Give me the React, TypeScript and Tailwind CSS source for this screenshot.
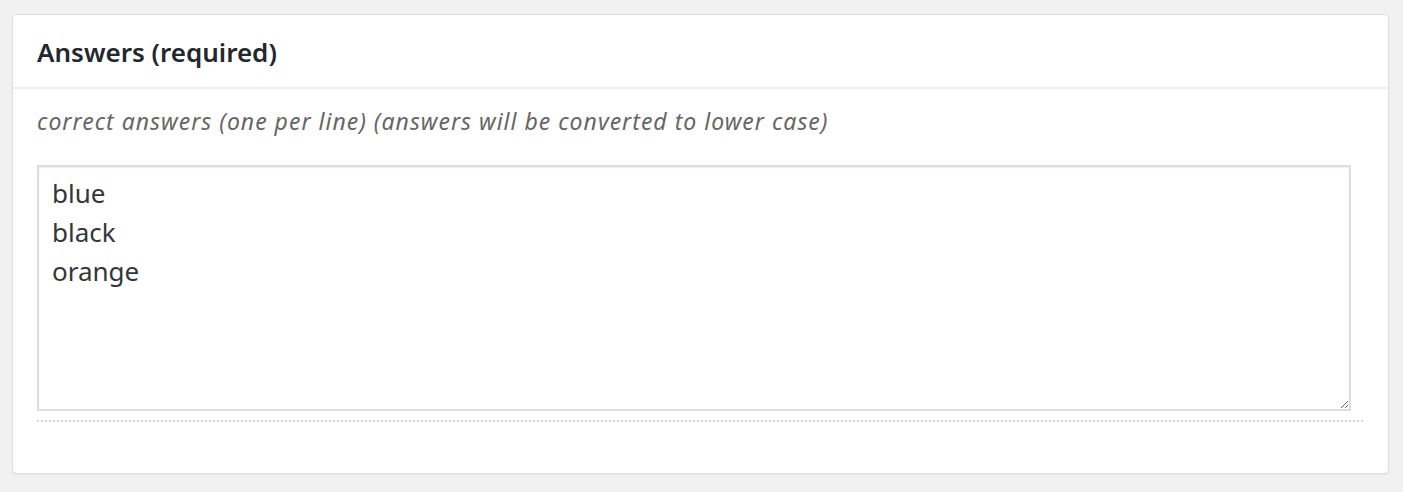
export default function App() {
  return (
    <div className="h-[492px] w-full bg-[#f1f1f1] pl-[12px] pr-[14px] pt-[14px] font-['Noto_Sans',sans-serif]">
      <div className="h-[460px] rounded-[4px] border border-[#dedede] bg-white shadow-[0_1px_1px_rgba(0,0,0,0.05)]">
        {/* header */}
        <div className="flex h-[74px] items-center border-b-2 border-[#eeeeee] px-[24px]">
          <h2 className="pt-[2px] text-[26px] font-semibold text-[#23282d]">Answers (required)</h2>
        </div>

        <div className="px-[24px]">
          <p className="mt-[16px] text-[23px] italic leading-[32px] tracking-[1px] text-[#666666]">
            correct answers (one per line) (answers will be converted to lower case)
          </p>

          <textarea
            defaultValue={"blue\nblack\norange"}
            className="mt-[28px] block h-[246px] w-[1314px] border-2 border-[#dddddd] px-[13px] pt-[7px] pb-[6px] text-[26px] leading-[39px] text-[#32373c] shadow-[inset_0_1px_2px_rgba(0,0,0,0.07)] outline-none"
          />

          <div className="mt-[9px] w-[1326px] border-t-2 border-dotted border-[#d4d4d4]" />
        </div>
      </div>
    </div>
  );
}
